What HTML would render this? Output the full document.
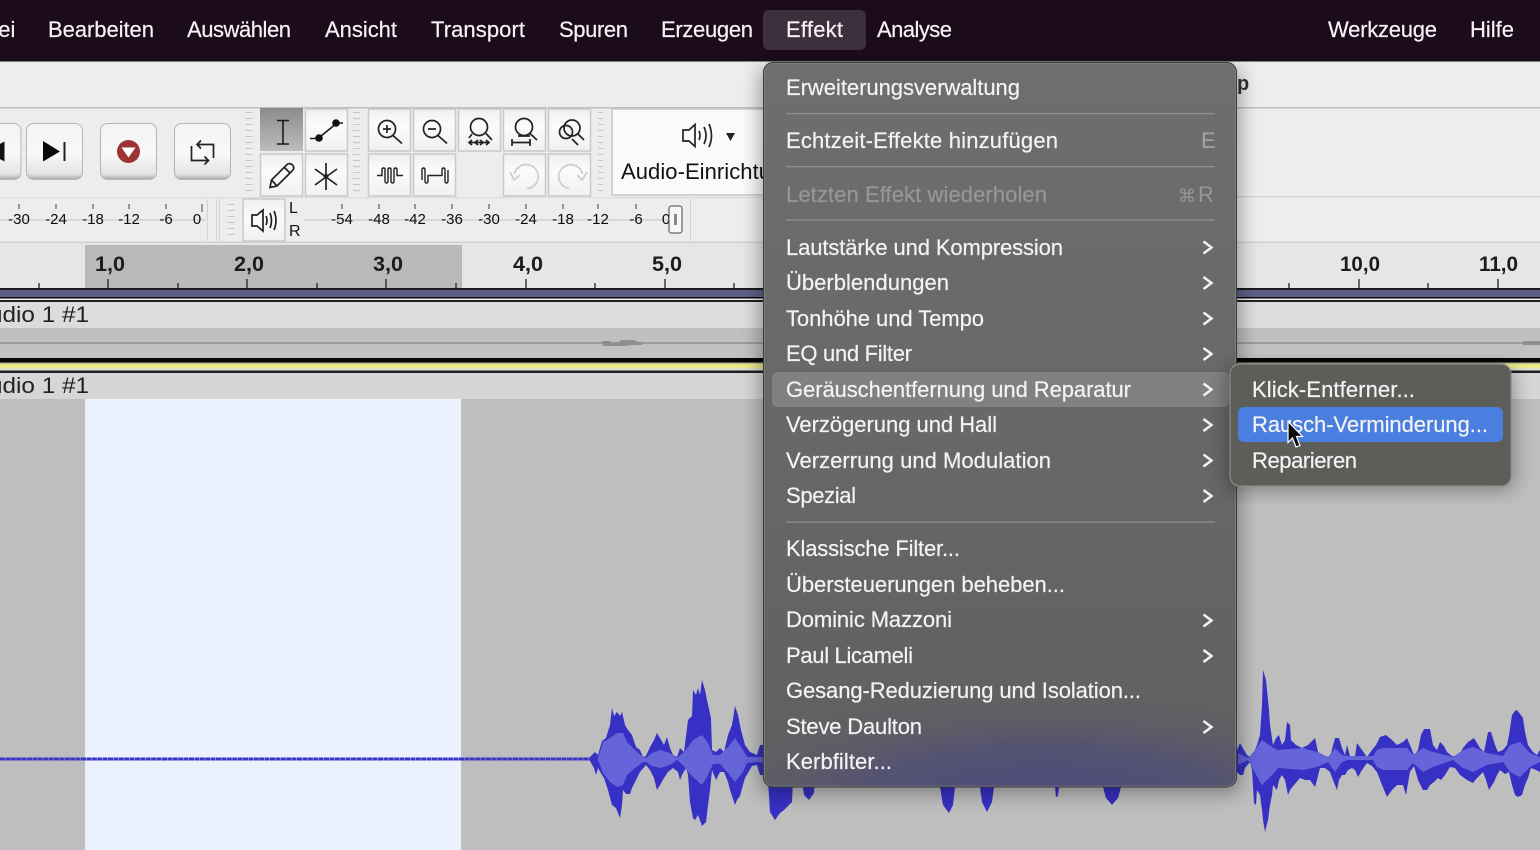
<!DOCTYPE html>
<html lang="de"><head><meta charset="utf-8"><title>Audacity Effekt-Menü</title>
<style>
html,body{margin:0;padding:0;background:#bebebe;overflow:hidden}
svg{display:block;width:1540px;height:850px}
text{font-family:"Liberation Sans",sans-serif}
.m{font-size:22px;fill:#f3f3f3;stroke:#f3f3f3;stroke-width:.2}
.d{font-size:22px;fill:#979797;stroke:#979797;stroke-width:.2}
.b{font-size:22px;fill:#f7f3f5;stroke:#f7f3f5;stroke-width:.2}
.t{font-size:15px;fill:#0c0c0c}
.r{font-size:21px;font-weight:bold;fill:#1c1c1c}
.l{font-size:22px;fill:#222}
.i{fill:none;stroke:#222;stroke-width:1.7}
</style></head><body>
<svg xmlns="http://www.w3.org/2000/svg" width="1540" height="850" viewBox="0 0 1540 850">
<defs>
<linearGradient id="tile" x1="0" y1="0" x2="0" y2="1"><stop offset="0" stop-color="#efefef"/><stop offset=".4" stop-color="#fbfbfb"/><stop offset="1" stop-color="#f0f0f0"/></linearGradient>
<linearGradient id="sel" x1="0" y1="0" x2="0" y2="1"><stop offset="0" stop-color="#8b8b8b"/><stop offset="1" stop-color="#bdbdbd"/></linearGradient>
<linearGradient id="btn" x1="0" y1="0" x2="0" y2="1"><stop offset="0" stop-color="#f3f3f3"/><stop offset=".55" stop-color="#f8f8f8"/><stop offset=".9" stop-color="#e4e4e4"/><stop offset="1" stop-color="#a8a8a8"/></linearGradient>
<linearGradient id="mb" x1="0" y1="0" x2="0" y2="1"><stop offset="0" stop-color="#6f6e6f"/><stop offset=".55" stop-color="#676767"/><stop offset="1" stop-color="#5f5f62"/></linearGradient>
<radialGradient id="pur" cx="0" cy="0" r="1" gradientUnits="userSpaceOnUse" gradientTransform="translate(1045 800) scale(370 105)"><stop offset="0" stop-color="#4a477e" stop-opacity=".95"/><stop offset=".5" stop-color="#4f4c78" stop-opacity=".7"/><stop offset="1" stop-color="#5f5f62" stop-opacity="0"/></radialGradient>
<linearGradient id="track" x1="0" y1="0" x2="0" y2="1"><stop offset="0" stop-color="#bfbfbf"/><stop offset="1" stop-color="#c2c2c2"/></linearGradient>
<filter id="sh" x="-10%" y="-10%" width="120%" height="120%"><feGaussianBlur stdDeviation="9"/></filter>
<clipPath id="mc"><rect x="763" y="62" width="474" height="725" rx="10"/></clipPath>
</defs>

<!-- background app -->
<rect width="1540" height="850" fill="#bebebe"/>
<rect y="61" width="1540" height="182" fill="#eeeded"/>
<rect y="107" width="1540" height="1.500" fill="#bfbfbf"/>
<rect x="1237" y="196" width="303" height="1.200" fill="#cfcfcf"/>
<rect y="197" width="763" height="1.200" fill="#dcdcdc"/>
<rect y="241.500" width="1540" height="1.500" fill="#cfcfcf"/>
<text x="1237" y="90" font-size="20" font-weight="bold" fill="#333">p</text>

<!-- transport buttons -->
<rect x="-30" y="123.500" width="51" height="56" rx="7" fill="url(#btn)" stroke="#b5b5b5"/>
<rect x="26.500" y="123.500" width="56" height="56" rx="7" fill="url(#btn)" stroke="#b5b5b5"/>
<rect x="100.500" y="123.500" width="56" height="56" rx="7" fill="url(#btn)" stroke="#b5b5b5"/>
<rect x="174.500" y="123.500" width="56" height="56" rx="7" fill="url(#btn)" stroke="#b5b5b5"/>
<path d="M-14 151.500L4.500 141.500V161.500Z" fill="#111"/>
<path d="M43 141L60 151.500L43 161.500Z" fill="#0a0a0a"/><rect x="63.500" y="142" width="2" height="19" fill="#222"/>
<circle cx="128.500" cy="151.500" r="11.500" fill="#9d3434"/><path d="M121.500 147.500H135.500L128.500 157.500Z" fill="#fff"/>
<path class="i" d="M197 144.500H213.500V158M191.500 146V160.500H208.500M201 140.500L197 144.500L201 148.500M204.500 156.500L208.500 160.500L204.500 164.500"/>

<!-- grips -->
<g fill="none" stroke="#c6c6c6" stroke-dasharray="1 5">
<path d="M249 112V194" stroke-width="7"/>
<path d="M356.500 112V194" stroke-width="7"/>
<path d="M600.500 112V194" stroke-width="5"/>
<path d="M231 204V238" stroke-width="7"/>
</g>

<!-- tool tiles -->
<rect x="260" y="108" width="43" height="43" fill="url(#sel)"/>
<g fill="url(#tile)" stroke="#c9c9c9" stroke-width="1.500">
<rect x="305.500" y="109" width="42" height="42"/>
<rect x="260.500" y="154" width="42" height="42"/>
<rect x="305.500" y="154" width="42" height="42"/>
<rect x="368.500" y="109" width="42" height="42"/>
<rect x="413.500" y="109" width="42" height="42"/>
<rect x="458.500" y="109" width="42" height="42"/>
<rect x="503.500" y="109" width="42" height="42"/>
<rect x="548.500" y="109" width="42" height="42"/>
<rect x="368.500" y="154" width="42" height="42"/>
<rect x="413.500" y="154" width="42" height="42"/>
<rect x="503.500" y="154" width="42" height="42"/>
<rect x="548.500" y="154" width="42" height="42"/>
<rect x="243" y="199" width="42" height="42"/>
</g>
<path d="M277 120.500H289M277 144H289M283 120.500V144" fill="none" stroke="#1a1a1a" stroke-width="1.600"/>
<path d="M318 138.500L337 123M310 138.500H318M337 123H343" fill="none" stroke="#1a1a1a" stroke-width="1.600"/><circle cx="319" cy="138" r="3.800" fill="#111"/><circle cx="336" cy="123" r="3.800" fill="#111"/>
<path class="i" d="M270 187.500L271.500 180L287 164.500Q290 162.500 292.500 165Q295 168 292.500 170.500L277 186ZM271.500 180L277 186M284 167L290 173"/>
<path class="i" d="M326 163V190M315 169L337 185M337 169L315 185"/>
<circle cx="326" cy="176.500" r="2.500" fill="#222"/>
<g class="i">
<circle cx="387" cy="129" r="8.500"/><path d="M393 135.500L402 143.500M383 129H391M387 125V133"/>
<circle cx="432" cy="129" r="8.500"/><path d="M438 135.500L447 143.500M428 129H436"/>
<circle cx="479" cy="127" r="8.500"/><path d="M472 134L469 138M486 133.500L492 140"/><path d="M469 142.500H489M472 140L469 142.500L472 145M486 140L489 142.500L486 145M478 140L475 142.500L478 145M480 140L483 142.500L480 145"/>
<circle cx="524" cy="127" r="8.500"/><path d="M530 133.500L537 140M512 142.500H530M512 139V146M530 139V146M518 136H530"/>
<circle cx="572" cy="128" r="8"/><circle cx="566" cy="132" r="6.500"/><path d="M578 134L584 140M572 139L578 145"/>
<path d="M377 175.500H382V169.500Q382 168 383.500 168T385 169.500V181Q385 183 386.500 183T388 181V169.500Q388 168 389.500 168T391 169.500V181Q391 183 392.500 183T394 181V169.500Q394 168 395.500 168T397 169.500V175.500H403" stroke-width="1.400"/>
<path d="M422 180V170Q422 168 423.500 168T425 170V181Q425 183 426.500 183T428 181V175.500H442V170Q442 168 443.500 168T445 170V181Q445 183 446.500 183T448 181V170" stroke-width="1.400"/>
</g>
<g fill="none" stroke="#cdcdcd" stroke-width="1.700">
<path d="M527 188.500A12 12 0 1 0 514.500 174"/><path d="M510 172L514 180L520 175"/>
<path d="M569 188.500A12 12 0 1 1 582.500 174"/><path d="M587 172L582 180L577 175"/>
</g>

<!-- audio setup -->
<rect x="612" y="109" width="160" height="86" fill="#fafafa" stroke="#c8c8c8" stroke-width="1.500"/>
<path class="i" d="M683 130V141H689L695 146.500V124.500L689 130ZM699 131Q701 135.500 699 140M704 127Q708 135.500 704 144M709 124Q714 135.500 709 147" stroke-width="1.500"/>
<path d="M726 133H735L730.500 141Z" fill="#222"/>
<text x="621" y="179" font-size="22" fill="#111" textLength="150">Audio-Einrichtu</text>

<!-- meters -->
<path d="M0 220H206M304 220H668" stroke="#c4c4c4" stroke-width="1"/>
<g stroke="#444" stroke-width="1">
<path d="M19 204V209M56 204V209M93 204V209M129 204V209M166 204V209M202 204V212M342 204V209M379 204V209M415 204V209M452 204V209M489 204V209M526 204V209M563 204V209M598 204V209M636 204V209"/>
</g>
<g class="t" text-anchor="middle">
<text x="19" y="224">-30</text><text x="56" y="224">-24</text><text x="93" y="224">-18</text><text x="129" y="224">-12</text><text x="166" y="224">-6</text><text x="197" y="224">0</text>
<text x="342" y="224">-54</text><text x="379" y="224">-48</text><text x="415" y="224">-42</text><text x="452" y="224">-36</text><text x="489" y="224">-30</text><text x="526" y="224">-24</text><text x="563" y="224">-18</text><text x="598" y="224">-12</text><text x="636" y="224">-6</text><text x="666" y="224">0</text>
</g>
<path d="M207.500 199V241M216.500 199V241M219.500 199V241M690.500 199V241" stroke="#d4d4d4" fill="none"/>
<rect x="669" y="206" width="13" height="27" rx="2.500" fill="#f7f7f7" stroke="#444"/><rect x="674" y="214" width="3" height="11" fill="#888"/>
<path class="i" d="M252 215V226H257L263 231V210L257 215ZM266 216Q268 220.500 266 225M270 213Q273 220.500 270 228M274 211Q278 220.500 274 230" stroke-width="1.400"/>
<text x="289" y="213" font-size="16" fill="#111">L</text><text x="289" y="236" font-size="16" fill="#111">R</text>

<!-- ruler -->
<rect y="243" width="1540" height="46" fill="#e6e6e6"/>
<rect x="85" y="245" width="377" height="44" fill="#b9b9b9"/>
<g stroke="#222" stroke-width="1.300">
<path d="M108 279V288M247 279V288M386 279V288M526 279V288M665 279V288M1359 279V288M1498 279V288M39 283V288M178 283V288M317 283V288M456 283V288M595 283V288M734 283V288M1289 283V288M1428 283V288"/>
</g>
<g class="r">
<text x="95" y="271" textLength="30" lengthAdjust="spacingAndGlyphs">1,0</text><text x="234" y="271" textLength="30" lengthAdjust="spacingAndGlyphs">2,0</text><text x="373" y="271" textLength="30" lengthAdjust="spacingAndGlyphs">3,0</text><text x="513" y="271" textLength="30" lengthAdjust="spacingAndGlyphs">4,0</text><text x="652" y="271" textLength="30" lengthAdjust="spacingAndGlyphs">5,0</text><text x="1340" y="271" textLength="40" lengthAdjust="spacingAndGlyphs">10,0</text><text x="1479" y="271" textLength="39" lengthAdjust="spacingAndGlyphs">11,0</text>
</g>

<!-- track strips -->
<rect y="288" width="1540" height="2" fill="#1a1a1a"/>
<rect y="290" width="1540" height="7" fill="#5c5f85"/>
<rect y="297" width="1540" height="1.500" fill="#0c0c0c"/>
<rect y="298.500" width="1540" height="1.500" fill="#efefef"/>
<rect y="300" width="1540" height="2" fill="#202020"/>
<rect y="302" width="1540" height="26" fill="#dcdcdc"/>
<rect y="328" width="1540" height="30" fill="url(#track)"/>
<rect y="342" width="1540" height="2" fill="#9c9c9c"/>
<path d="M602 341H610L612 343H618L621 340H634L638 342H642V345H632L625 346H603Z" fill="#8f8f93"/>
<rect x="1523" y="341" width="17" height="4" fill="#8f8f93"/>
<rect y="358" width="1540" height="4.500" fill="#060606"/>
<rect y="362.500" width="1540" height="1.200" fill="#a9a88a"/>
<rect y="363.700" width="1540" height="4.800" fill="#ecea88"/>
<rect y="368.500" width="1540" height="2" fill="#dedede"/>
<rect y="370.500" width="1540" height="2.500" fill="#202020"/>
<rect y="373" width="1540" height="26" fill="#d6d6d6"/>
<text class="l" x="-11" y="322" textLength="100" lengthAdjust="spacingAndGlyphs">udio 1 #1</text>
<text class="l" x="-11" y="393" textLength="100" lengthAdjust="spacingAndGlyphs">udio 1 #1</text>

<!-- wave area -->
<rect y="399" width="1540" height="451" fill="#bebebe"/>
<rect x="85" y="399" width="376" height="451" fill="#ebf1ff"/>

<!-- waveform -->
<path d="M0 759H600" stroke="#3a35c4" stroke-width="3" stroke-dasharray="5 .4"/>
<g fill="#3730c4">
<path d="M590 757L595 752L598 755L602 741L606 738L610 725L612 708L614 716L617 712L620 716L622 712L625 725L628 730L632 735L636 747L640 750L643 757L646 756L650 747L654 740L657 733L660 738L664 745L667 737L670 748L673 755L677 757L680 748L684 752L688 720L692 716L693 690L696 695L698 688L700 695L702 680L705 690L707 700L711 718L712 750L716 752L720 748L724 752L728 735L732 725L735 706L738 715L741 730L745 745L750 752L757 755L760 745L770 745V775L760 775L757 765L752 766L745 778L743 785L740 796L737 800L735 805L730 790L728 782L724 772L720 772L716 780L712 770L710 790L708 805L706 822L702 826L698 815L695 820L693 818L690 802L688 775L686 768L682 775L680 780L678 772L673 768L668 772L664 778L660 785L657 790L654 778L650 770L646 765L640 772L636 780L632 788L630 794L626 794L623 790L622 805L620 818L616 808L612 805L608 790L604 778L602 775L598 768L596 775L594 768L590 761Z"/>
<path d="M768 780H793L792 802L784 810L780 813L775 820L770 812ZM802 780H815L814 793L809 800L804 795Z"/>
<path d="M940 787H955L953 805L949 813L943 805ZM980 787H994L992 802L987 812L982 802ZM1055 787H1059L1058 796L1056 797ZM1103 787H1121L1118 798L1112 805L1106 798Z"/>
<path d="M1237 750L1240 743L1244 750L1247 755L1250 757L1254 752L1257 745L1260 735L1262 705L1263 670L1266 680L1267 690L1269 710L1270 725L1273 745L1276 738L1279 735L1282 745L1285 740L1287 722L1290 725L1291 740L1296 745L1302 748L1308 745L1315 738L1318 752L1325 756L1330 757L1335 738L1339 738L1342 748L1345 755L1347 745L1350 756L1355 756L1357 743L1362 750L1367 757L1372 750L1376 745L1380 737L1386 735L1392 740L1397 745L1403 742L1407 738L1410 745L1414 755L1418 750L1421 735L1424 729L1430 729L1433 745L1437 750L1440 742L1444 746L1447 752L1452 756L1458 757L1463 748L1468 742L1474 738L1480 748L1484 752L1488 732L1491 732L1495 745L1498 752L1503 750L1507 745L1509 735L1512 715L1515 711L1517 710L1520 714L1523 718L1525 732L1528 745L1533 752L1537 755L1540 750V772L1536 770L1531 768L1528 778L1525 785L1522 795L1518 797L1515 795L1512 785L1509 772L1505 774L1500 770L1497 775L1494 782L1489 790L1486 780L1483 772L1477 778L1473 783L1467 780L1460 775L1455 768L1450 767L1445 775L1441 780L1438 778L1434 782L1430 785L1427 790L1423 790L1418 780L1414 766L1410 772L1406 795L1403 785L1397 785L1392 790L1387 797L1382 785L1377 772L1372 766L1367 763L1362 770L1358 777L1355 770L1352 768L1348 770L1345 775L1342 775L1339 780L1337 790L1333 780L1330 772L1325 768L1320 768L1317 780L1315 787L1310 780L1305 780L1300 778L1294 785L1290 790L1288 795L1285 780L1282 775L1279 780L1277 790L1273 785L1272 795L1270 805L1268 820L1265 832L1263 820L1262 810L1260 795L1257 790L1256 805L1254 803L1252 770L1250 762L1245 768L1243 775L1240 775L1237 772Z"/>
</g>
<g fill="#6564d8">
<path d="M598 758L603 742L610 738L617 733L623 733L627 742L635 750L643 757L646 758L652 753L660 750L670 753L677 758L683 753L688 747L693 740L702 735L708 743L713 755L720 755L728 747L735 738L743 750L747 757L757 757L765 757V763L757 762L747 763L743 772L735 782L728 773L720 764L713 764L708 775L702 785L693 777L688 772L683 765L677 760L670 765L660 768L652 766L646 762L643 762L635 768L627 775L623 785L617 787L610 782L603 773L598 760Z"/>
<path d="M1238 753L1248 758L1255 750L1262 740L1272 747L1278 750L1303 748L1317 752L1328 757L1335 748L1342 755L1348 756L1373 756L1377 750L1383 748L1407 748L1413 755L1423 748L1433 752L1453 757L1463 750L1473 747L1487 753L1503 756L1510 745L1520 742L1530 753L1540 757V762L1530 767L1520 777L1510 772L1503 762L1487 765L1473 772L1463 768L1453 760L1433 767L1423 772L1413 763L1407 770L1383 770L1377 767L1373 760L1348 760L1342 762L1335 772L1328 762L1317 767L1303 770L1278 768L1272 775L1262 785L1255 773L1248 760L1238 765Z"/>
</g>

<!-- menubar -->
<rect width="1540" height="61" fill="#1c0b1b"/>
<rect y="60" width="1540" height="1.500" fill="#141014"/>
<rect x="763" y="10" width="103" height="40" rx="6" fill="#3e2f3d"/>
<g class="b">
<text x="-36" y="37">Datei</text>
<text x="48" y="37" textLength="106">Bearbeiten</text>
<text x="187" y="37" textLength="104">Auswählen</text>
<text x="325" y="37" textLength="72">Ansicht</text>
<text x="431" y="37" textLength="94">Transport</text>
<text x="559" y="37" textLength="69">Spuren</text>
<text x="661" y="37" textLength="92">Erzeugen</text>
<text x="786" y="37" textLength="57">Effekt</text>
<text x="877" y="37" textLength="75">Analyse</text>
<text x="1328" y="37" textLength="109">Werkzeuge</text>
<text x="1470" y="37" textLength="44">Hilfe</text>
</g>

<!-- main menu -->
<rect x="759" y="66" width="482" height="728" rx="12" fill="#000" opacity=".32" filter="url(#sh)"/>
<rect x="763" y="62" width="474" height="725" rx="10" fill="url(#mb)"/>
<g clip-path="url(#mc)"><rect x="763" y="660" width="474" height="130" fill="url(#pur)"/></g>
<rect x="763.500" y="62.500" width="473" height="724.500" rx="10" fill="none" stroke="#3c3c3c" stroke-width="1"/>
<rect x="764.500" y="63.500" width="471" height="722.500" rx="9" fill="none" stroke="#8a8a8a" stroke-opacity=".55" stroke-width="1"/>
<rect x="772" y="372" width="458" height="35" rx="6" fill="#81817f"/>
<g fill="#8f8f8f">
<rect x="786" y="113" width="429" height="1.300"/><rect x="786" y="166" width="429" height="1.300"/><rect x="786" y="219.500" width="429" height="1.300"/><rect x="786" y="521.500" width="429" height="1.300"/>
</g>
<g class="m">
<text x="786" y="95" textLength="234">Erweiterungsverwaltung</text>
<text x="786" y="148" textLength="272">Echtzeit-Effekte hinzufügen</text>
<text x="786" y="255" textLength="277">Lautstärke und Kompression</text>
<text x="786" y="290" textLength="163">Überblendungen</text>
<text x="786" y="326" textLength="198">Tonhöhe und Tempo</text>
<text x="786" y="361" textLength="126">EQ und Filter</text>
<text x="786" y="397" textLength="345">Geräuschentfernung und Reparatur</text>
<text x="786" y="432" textLength="211">Verzögerung und Hall</text>
<text x="786" y="468" textLength="265">Verzerrung und Modulation</text>
<text x="786" y="503" textLength="70">Spezial</text>
<text x="786" y="556" textLength="174">Klassische Filter...</text>
<text x="786" y="592" textLength="279">Übersteuerungen beheben...</text>
<text x="786" y="627" textLength="166">Dominic Mazzoni</text>
<text x="786" y="663" textLength="127">Paul Licameli</text>
<text x="786" y="698" textLength="355">Gesang-Reduzierung und Isolation...</text>
<text x="786" y="734" textLength="136">Steve Daulton</text>
<text x="786" y="769" textLength="106">Kerbfilter...</text>
</g>
<text class="d" x="786" y="202" textLength="261">Letzten Effekt wiederholen</text>
<text x="1201" y="148" font-size="22" fill="#a3a3a3">E</text>
<text x="1178" y="202" font-size="18" fill="#979797" font-family="DejaVu Sans">⌘</text>
<text x="1198" y="202" font-size="22" fill="#979797">R</text>
<path d="M1203.500 241.500L1211.500 247.500L1203.500 253.500M1203.500 277L1211.500 283L1203.500 289M1203.500 312.500L1211.500 318.500L1203.500 324.500M1203.500 348L1211.500 354L1203.500 360M1203.500 383.500L1211.500 389.500L1203.500 395.500M1203.500 419L1211.500 425L1203.500 431M1203.500 454.500L1211.500 460.500L1203.500 466.500M1203.500 490L1211.500 496L1203.500 502M1203.500 614.500L1211.500 620.500L1203.500 626.500M1203.500 650L1211.500 656L1203.500 662M1203.500 721L1211.500 727L1203.500 733" fill="none" stroke="#f3f3f3" stroke-width="2.500"/>

<!-- submenu -->
<rect x="1226" y="367" width="289" height="124" rx="12" fill="#000" opacity=".3" filter="url(#sh)"/>
<rect x="1230" y="364" width="281" height="122" rx="10" fill="#5d5d59" stroke="#8a8a86" stroke-width="1.200"/>
<rect x="1238" y="407" width="265" height="35" rx="6" fill="#4a7fdf"/>
<g class="m">
<text x="1252" y="397" textLength="163">Klick-Entferner...</text>
<text x="1252" y="432" textLength="236">Rausch-Verminderung...</text>
<text x="1252" y="468" textLength="105">Reparieren</text>
</g>
<!-- cursor -->
<path d="M1288 421.500V442.500L1292.500 438L1296 447L1300 445.500L1296.500 436.500H1302.500Z" fill="#0b0b0b" stroke="#fff" stroke-width="1.200"/>
</svg>
</body></html>
